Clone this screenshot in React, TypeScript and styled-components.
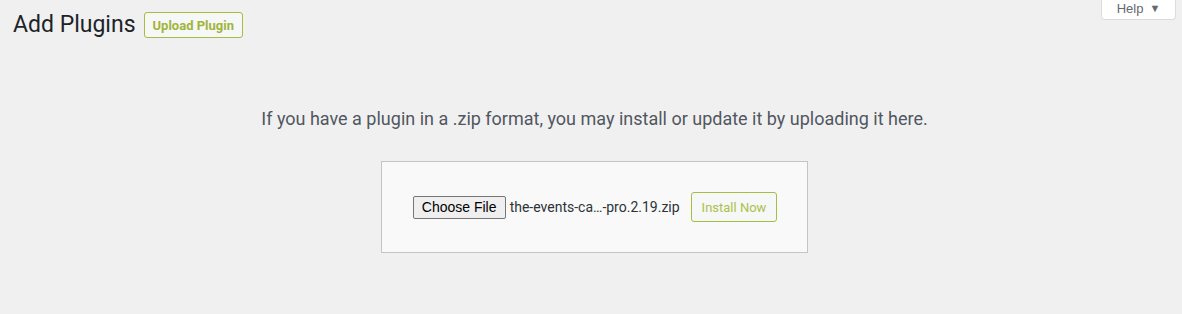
import React from "react";
import styled, { createGlobalStyle } from "styled-components";

const GlobalStyle = createGlobalStyle`
  html, body {
    margin: 0;
    padding: 0;
    background: #f0f0f1;
    font-family: Roboto, "Liberation Sans", sans-serif;
    color: #3c434a;
  }
  * { box-sizing: border-box; }
`;

const Page = styled.div`
  width: 1182px;
  height: 314px;
  padding: 0 6px 0 13px;
  display: flex;
  flex-direction: column;
  overflow: hidden;
`;

const Header = styled.div`
  display: flex;
  justify-content: space-between;
  align-items: flex-start;
`;

const TitleRow = styled.div`
  display: flex;
  align-items: center;
  gap: 8px;
  margin-top: 10px;
`;

const Title = styled.h1`
  margin: 0;
  font-size: 23px;
  font-weight: 400;
  line-height: 30px;
  color: #1d2327;
`;

const OutlineButton = styled.button<{ $bold?: boolean; $height: number }>`
  height: ${(p) => p.$height}px;
  padding: 0 ${(p) => (p.$bold ? 8 : 10)}px;
  background: #f6f7f7;
  border: 1px solid #a7bc40;
  border-radius: 3px;
  color: ${(p) => (p.$bold ? "#a0b53a" : "#adc04c")};
  font-family: Roboto, "Liberation Sans", sans-serif;
  font-size: 13px;
  font-weight: ${(p) => (p.$bold ? 700 : 400)};
  line-height: 1;
  cursor: pointer;
`;

const HelpTab = styled.button`
  width: 75px;
  height: 21px;
  margin-top: -1px;
  background: #fff;
  border: 1px solid #dcdcde;
  border-top: none;
  border-radius: 0 0 4px 4px;
  color: #646970;
  font-family: "Liberation Sans", Arial, sans-serif;
  font-size: 13px;
  line-height: 1;
  padding: 0 0 2px;
  display: flex;
  align-items: center;
  justify-content: center;
  gap: 6px;
`;

const Caret = styled.span`
  font-size: 11px;
  color: #646970;
`;

const Body = styled.div`
  display: flex;
  flex-direction: column;
  align-items: center;
`;

const Help = styled.p`
  margin: 67px 0 0;
  font-size: 18px;
  line-height: 24px;
  color: #50575e;
  text-align: center;
`;

const UploadForm = styled.form`
  margin-top: 30px;
  display: flex;
  align-items: center;
  padding: 30px 30px 30px 31px;
  background: #f9f9f9;
  border: 1px solid #c3c4c7;
`;

const FileButton = styled.button`
  width: 93px;
  height: 23px;
  padding: 0;
  background: #efefef;
  border: 1px solid #767676;
  border-radius: 2px;
  color: #000;
  font-family: "Liberation Sans", Arial, sans-serif;
  font-size: 14px;
  line-height: 1;
`;

const FileName = styled.span`
  margin: 0 11px 0 4px;
  font-size: 14px;
  color: #2c3338;
`;

export default function App() {
  return (
    <>
      <GlobalStyle />
      <Page>
        <Header>
          <TitleRow>
            <Title>Add Plugins</Title>
            <OutlineButton $bold $height={26}>Upload Plugin</OutlineButton>
          </TitleRow>
          <HelpTab>
            Help <Caret>▼</Caret>
          </HelpTab>
        </Header>
        <Body>
          <Help>
            If you have a plugin in a .zip format, you may install or update it by uploading it here.
          </Help>
          <UploadForm onSubmit={(e) => e.preventDefault()}>
            <FileButton type="button">Choose File</FileButton>
            <FileName>the-events-ca…-pro.2.19.zip</FileName>
            <OutlineButton $height={30} type="submit">Install Now</OutlineButton>
          </UploadForm>
        </Body>
      </Page>
    </>
  );
}
